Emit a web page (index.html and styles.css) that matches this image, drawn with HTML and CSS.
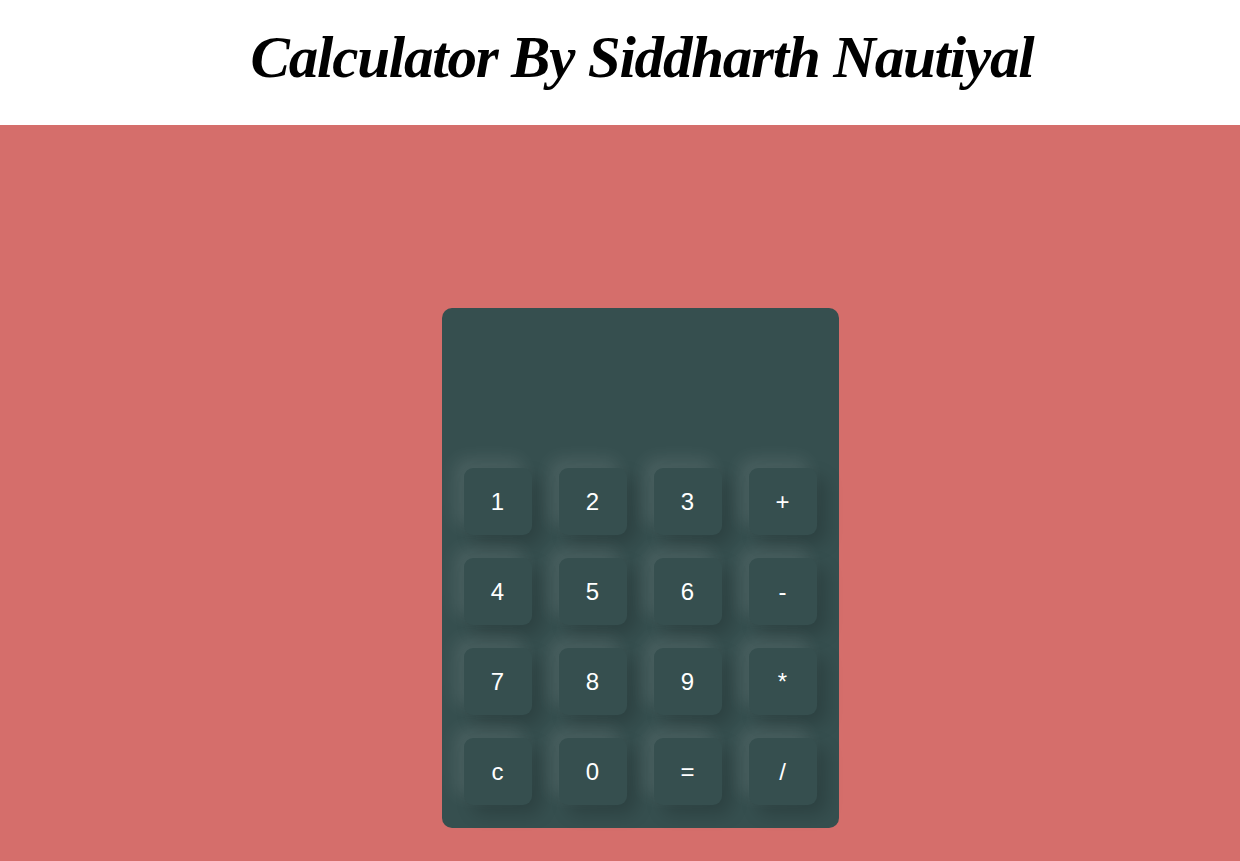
FILE: index.html
```html
<!DOCTYPE html>
<html>
<head>
<meta charset="utf-8">
<title>Calculator</title>
<link rel="stylesheet" href="styles.css">
</head>
<body>
<header class="header">
  <h1 class="title">Calculator By Siddharth Nautiyal</h1>
</header>
<main class="stage">
  <div class="calc">
    <div class="display"></div>
    <div class="keys">
      <button class="key">1</button>
      <button class="key">2</button>
      <button class="key">3</button>
      <button class="key">+</button>
      <button class="key">4</button>
      <button class="key">5</button>
      <button class="key">6</button>
      <button class="key">-</button>
      <button class="key">7</button>
      <button class="key">8</button>
      <button class="key">9</button>
      <button class="key">*</button>
      <button class="key">c</button>
      <button class="key">0</button>
      <button class="key">=</button>
      <button class="key">/</button>
    </div>
  </div>
</main>
</body>
</html>
```
FILE: styles.css
```css
html, body {
  margin: 0;
  padding: 0;
}
body {
  background: #d56e6b;
  font-family: "Liberation Sans", Arial, sans-serif;
}
.header {
  background: #ffffff;
  height: 125px;
  box-sizing: border-box;
  padding-left: 44px;
  display: flex;
  justify-content: center;
  align-items: center;
}
.title {
  margin: 0;
  font-family: "Liberation Serif", "Times New Roman", serif;
  font-style: italic;
  font-weight: bold;
  font-size: 59px;
  letter-spacing: -1.2px;
  line-height: 1;
  color: #000;
  padding-bottom: 11px;
}
.stage {
  display: flex;
  justify-content: center;
  padding-top: 183px;
  padding-left: 40px;
  padding-bottom: 40px;
}
.calc {
  width: 397px;
  box-sizing: border-box;
  background: #364f4f;
  border-radius: 10px;
  padding: 0 22px 23px 22px;
}
.display {
  height: 160px;
}
.keys {
  display: grid;
  grid-template-columns: repeat(4, 68px);
  grid-auto-rows: 67px;
  column-gap: 27px;
  row-gap: 23px;
}
.key {
  border: none;
  background: #364f4f;
  color: #ffffff;
  font-family: "Liberation Sans", Arial, sans-serif;
  font-size: 24px;
  border-radius: 9px;
  box-shadow: -9px -9px 18px rgba(255, 255, 255, 0.1), 9px 9px 18px rgba(0, 0, 0, 0.18);
  padding: 0;
}
```
